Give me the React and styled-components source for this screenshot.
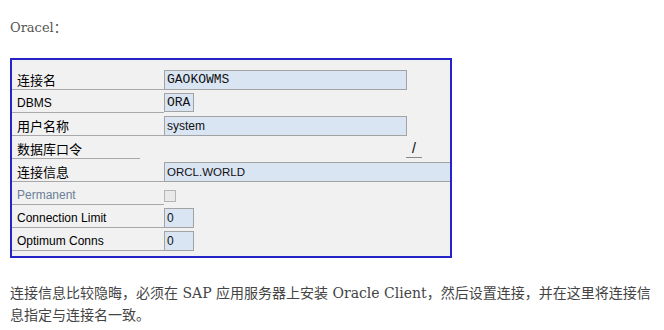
import styled, { createGlobalStyle } from 'styled-components';

const GlobalStyle = createGlobalStyle`
  body {
    margin: 0;
    background: #ffffff;
    font-family: 'Liberation Sans', 'Noto Sans CJK SC', sans-serif;
  }
`;

const Page = styled.div`
  width: 664px;
  height: 330px;
  padding: 18px 0 0 10px;
  box-sizing: border-box;
  overflow: hidden;
`;

const Title = styled.div`
  font-family: 'DejaVu Serif', 'Noto Sans CJK SC', serif;
  font-size: 13px;
  line-height: 20px;
  color: #555555;
  height: 20px;
`;

const Frame = styled.div`
  margin-top: 20px;
  width: 442px;
  height: 200px;
  box-sizing: border-box;
  border: 2px solid #2424c8;
  background: #f1f1f1;
  padding: 8px 0 0 0;
`;

const Grid = styled.div`
  display: grid;
  grid-template-columns: 152px 1fr;
  grid-auto-rows: 23px;
`;

const Label = styled.div`
  display: flex;
  align-items: center;
  padding-left: 5px;
  font-family: ${(p) =>
    p.$cjk
      ? "'Noto Sans CJK SC', sans-serif"
      : "'Liberation Sans', sans-serif"};
  font-size: ${(p) => (p.$cjk ? '13px' : '12px')};
  color: ${(p) => (p.$muted ? '#6a8097' : '#000000')};
  position: relative;

  &::after {
    content: '';
    position: absolute;
    left: 0;
    bottom: 1px;
    width: ${(p) => p.$lineWidth || 152}px;
    border-bottom: 1px solid #a8a8a8;
  }
`;

const Cell = styled.div`
  display: flex;
  align-items: center;
  position: relative;
`;

const Field = styled.div`
  box-sizing: border-box;
  width: ${(p) => p.$width}px;
  height: ${(p) => p.$height || 20}px;
  border: 1px solid #a3a3a3;
  background: #dae5f3;
  padding-left: 2px;
  display: flex;
  align-items: center;
  font-family: ${(p) =>
    p.$mono
      ? "'Liberation Mono', 'Courier New', monospace"
      : "'Liberation Sans', sans-serif"};
  font-size: ${(p) => (p.$mono ? '13px' : '12px')};
  color: #111111;
  white-space: nowrap;
`;

const WideField = styled(Field)`
  border-right: none;
  font-size: 11.5px;
`;

const Slash = styled.span`
  margin-left: 242px;
  width: 16px;
  height: 16px;
  margin-top: 2px;
  border-bottom: 1px solid #888888;
  text-align: center;
  font-size: 14px;
  line-height: 14px;
  font-family: 'Liberation Sans', sans-serif;
  color: #000;
`;

const Checkbox = styled.span`
  display: inline-block;
  width: 12px;
  height: 12px;
  box-sizing: border-box;
  border: 1px solid #b4b4b4;
  background: #e9e9e9;
  margin-top: 3px;
`;

const Paragraph = styled.p`
  margin: 24px 0 0 0;
  width: 652px;
  font-family: 'DejaVu Serif', 'Noto Sans CJK SC', serif;
  font-size: 14px;
  line-height: 22px;
  color: #444444;
`;

const rows = [
  { label: '连接名', cjk: true, value: 'GAOKOWMS', mono: true, width: 243 },
  { label: 'DBMS', value: 'ORA', mono: true, width: 30, height: 19 },
  { label: '用户名称', cjk: true, value: 'system', width: 243 },
  { label: '数据库口令', cjk: true, password: true, lineWidth: 128 },
  { label: '连接信息', cjk: true, value: 'ORCL.WORLD', wide: true },
  { label: 'Permanent', muted: true, checkbox: true },
  { label: 'Connection Limit', value: '0', width: 30 },
  { label: 'Optimum Conns', value: '0', width: 30 },
];

function FieldCell({ row }) {
  if (row.password) {
    return (
      <Cell>
        <Slash>/</Slash>
      </Cell>
    );
  }
  if (row.checkbox) {
    return (
      <Cell>
        <Checkbox />
      </Cell>
    );
  }
  if (row.wide) {
    return (
      <Cell>
        <WideField $width={286}>{row.value}</WideField>
      </Cell>
    );
  }
  return (
    <Cell>
      <Field $width={row.width} $height={row.height} $mono={row.mono}>
        {row.value}
      </Field>
    </Cell>
  );
}

export default function App() {
  return (
    <Page>
      <GlobalStyle />
      <Title>Oracel：</Title>
      <Frame>
        <Grid>
          {rows.map((row) => [
            <Label
              key={row.label + '-l'}
              $cjk={row.cjk}
              $muted={row.muted}
              $lineWidth={row.lineWidth}
            >
              {row.label}
            </Label>,
            <FieldCell key={row.label + '-v'} row={row} />,
          ])}
        </Grid>
      </Frame>
      <Paragraph>
        连接信息比较隐晦，必须在 SAP 应用服务器上安装 Oracle Client，然后设置连接，并在这里将连接信息指定与连接名一致。
      </Paragraph>
    </Page>
  );
}
